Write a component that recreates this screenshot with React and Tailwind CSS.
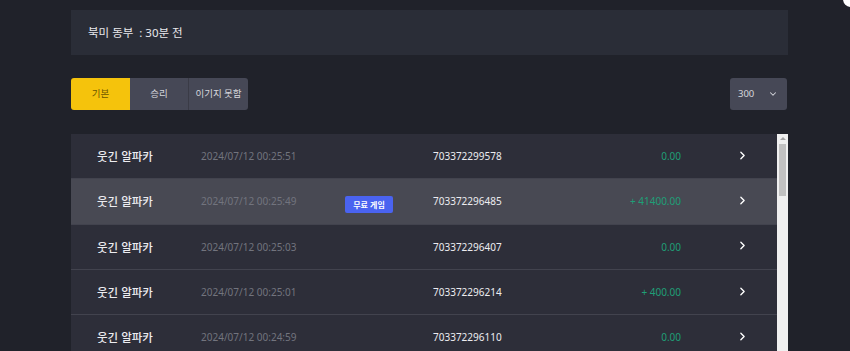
import { ChevronRight, ChevronDown } from 'lucide-react'

const rows = [
  { name: '웃긴 알파카', date: '2024/07/12 00:25:51', id: '703372299578', amount: '0.00' },
  { name: '웃긴 알파카', date: '2024/07/12 00:25:49', id: '703372296485', amount: '+ 41400.00', free: true, active: true },
  { name: '웃긴 알파카', date: '2024/07/12 00:25:03', id: '703372296407', amount: '0.00' },
  { name: '웃긴 알파카', date: '2024/07/12 00:25:01', id: '703372296214', amount: '+ 400.00' },
  { name: '웃긴 알파카', date: '2024/07/12 00:24:59', id: '703372296110', amount: '0.00' },
]

const font = { fontFamily: '"Noto Sans", "Noto Sans CJK KR", sans-serif' }

export default function App() {
  return (
    <div className="relative w-[850px] h-[351px] overflow-hidden bg-[#20222a]" style={font}>
      <div className="absolute -top-[9px] -right-[9px] w-[16px] h-[16px] rounded-full bg-white"></div>
      <div className="ml-[71px] w-[717px] pt-[10px]">
        {/* 서버 정보 */}
        <div className="h-[45px] bg-[#2a2d37] flex items-center pl-[17px] text-[11.5px] text-[#e8e8ec]">
          북미 동부 &nbsp;: 30분 전
        </div>

        {/* 필터 */}
        <div className="mt-[23px] flex justify-between items-center">
          <div className="flex h-[32px] rounded-[3px] overflow-hidden text-[9.5px]">
            <button className="w-[59px] bg-[#f5c30c] text-[#6b5600]">기본</button>
            <button className="w-[59px] bg-[#464856] text-[#d6d7dd] border-r border-[#3a3b46]">승리</button>
            <button className="w-[59px] bg-[#464856] text-[#d6d7dd]">이기지 못함</button>
          </div>
          <div className="mr-px w-[57px] h-[32px] rounded-[3px] bg-[#464856] flex items-center justify-between pl-[8px] pr-[9px] text-[9.5px] text-[#d6d7dd]">
            <span>300</span>
            <ChevronDown size={10} strokeWidth={2.5} />
          </div>
        </div>

        {/* 게임 목록 */}
        <div className="mt-[24px] flex">
          <div className="flex-1">
            {rows.map((r, i) => (
              <div
                key={i}
                className={`h-[45.3px] pt-px flex items-center border-b border-[#42434e] ${r.active ? 'bg-[#484953]' : 'bg-[#2d2e39]'}`}
              >
                <div className="w-[130px] pl-[26px] text-[11.5px] font-medium text-[#ececf0]">{r.name}</div>
                <div className="w-[144px] text-[10px] text-[#72747e]">{r.date}</div>
                <div className="w-[88px]">
                  {r.free && (
                    <span className="inline-flex items-center justify-center w-[48px] h-[17px] rounded-[2px] bg-[#4a63f0] text-[8px] font-semibold text-white">
                      무료 게임
                    </span>
                  )}
                </div>
                <div className="w-[120px] text-[10px] text-[#ececf0]">{r.id}</div>
                <div className="w-[128px] text-right text-[10px] text-[#1f9e77]">{r.amount}</div>
                <div className="flex-1 pl-[55px] pb-[3px] text-white">
                  <ChevronRight size={13} strokeWidth={2.5} />
                </div>
              </div>
            ))}
          </div>
          {/* 스크롤바 */}
          <div className="w-[11px] h-[220px] bg-[#f0f0f0] flex flex-col items-center">
            <div className="mt-[3px] w-0 h-0 border-l-[3px] border-r-[3px] border-b-[3px] border-l-transparent border-r-transparent border-b-[#a3a3a3]"></div>
            <div className="mt-[4px] w-[7px] h-[52px] bg-[#c1c1c1]"></div>
          </div>
        </div>
      </div>
    </div>
  )
}
